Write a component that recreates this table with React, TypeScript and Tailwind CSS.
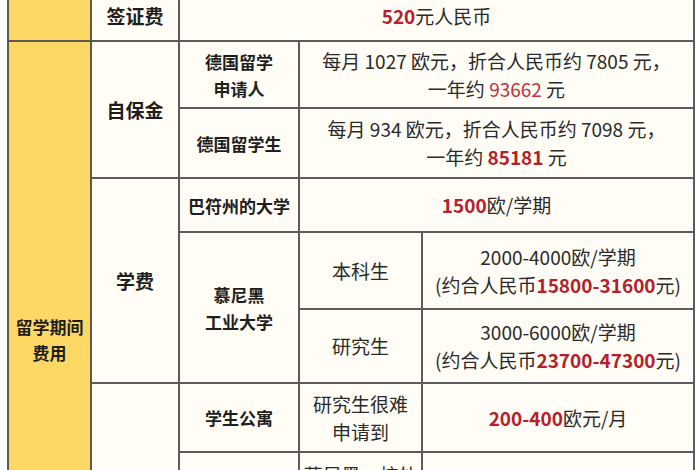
import React from "react";

const R = ({ children, bold = true }: { children: React.ReactNode; bold?: boolean }) => (
  <span className={bold ? "font-bold text-[#b5202a]" : "text-[#c0303a]"}>{children}</span>
);

const td = "border-2 border-[#5c5c5c] bg-[#fffdf5] text-center align-middle p-0";
const c2 = `${td} text-[19px] font-bold leading-[26px]`;
const c3 = `${td} text-[17px] font-bold leading-[27px]`;
const body = `${td} text-[19px] leading-[28px] text-[#2a2a2a]`;

export default function App() {
  return (
    <div
      className="w-[700px] h-[470px] overflow-hidden bg-white text-[#1e1e1e]"
      style={{ fontFamily: '"Noto Sans CJK SC", "Noto Sans", sans-serif' }}
    >
      <table className="ml-[7px] -mt-[12px] w-[686px] table-fixed border-collapse">
        <colgroup>
          <col className="w-[83px]" />
          <col className="w-[88px]" />
          <col className="w-[120px]" />
          <col className="w-[123px]" />
          <col className="w-[272px]" />
        </colgroup>
        <tbody>
          <tr className="h-[52px]">
            <td className="border-2 border-[#5c5a4c] bg-[#fed864]" />
            <td className={c2}>
              <div className="pt-[2px]">签证费</div>
            </td>
            <td className={body} colSpan={3}>
              <div className="pt-[2px]">
                <R>520</R>元人民币
              </div>
            </td>
          </tr>
          <tr className="h-[67px]">
            <td
              rowSpan={8}
              className="border-2 border-[#5c5a4c] bg-[#fed864] text-center align-middle text-[17px] font-bold leading-[26px]"
            >
              留学期间
              <br />
              费用
            </td>
            <td className={c2} rowSpan={2}>
              自保金
            </td>
            <td className={c3}>
              德国留学
              <br />
              申请人
            </td>
            <td className={body} colSpan={2}>
              每月 1027 欧元，折合人民币约 7805 元，
              <br />
              一年约 <R bold={false}>93662</R> 元
            </td>
          </tr>
          <tr className="h-[70px]">
            <td className={c3}>德国留学生</td>
            <td className={body} colSpan={2}>
              每月 934 欧元，折合人民币约 7098 元，
              <br />
              一年约 <R>85181</R> 元
            </td>
          </tr>
          <tr className="h-[54px]">
            <td className={c2} rowSpan={3}>
              学费
            </td>
            <td className={c3}>巴符州的大学</td>
            <td className={body} colSpan={2}>
              <R>1500</R>欧/学期
            </td>
          </tr>
          <tr className="h-[77px]">
            <td className={c3} rowSpan={2}>
              慕尼黑
              <br />
              工业大学
            </td>
            <td className={body}>本科生</td>
            <td className={body}>
              2000-4000欧/学期
              <br />
              (约合人民币<R>15800-31600</R>元)
            </td>
          </tr>
          <tr className="h-[74px]">
            <td className={body}>研究生</td>
            <td className={body}>
              3000-6000欧/学期
              <br />
              (约合人民币<R>23700-47300</R>元)
            </td>
          </tr>
          <tr className="h-[69px]">
            <td className={c2} rowSpan={3}>
              住宿费
            </td>
            <td className={c3}>学生公寓</td>
            <td className={body}>
              研究生很难
              <br />
              申请到
            </td>
            <td className={body}>
              <R>200-400</R>欧元/月
            </td>
          </tr>
          <tr className="h-[100px]">
            <td className={c3}>私人公寓</td>
            <td className={`${body} align-top pt-[8px]`}>
              慕尼黑、校外
              <br />
              单间
              <br />
              城内合租
            </td>
            <td className={body}>
              <R>500-800</R>欧元/月
            </td>
          </tr>
          <tr className="h-[86px]">
            <td className={c3}>合租</td>
            <td className={body}>其他城市</td>
            <td className={body}>
              <R>300-500</R>欧元/月
            </td>
          </tr>
        </tbody>
      </table>
    </div>
  );
}
